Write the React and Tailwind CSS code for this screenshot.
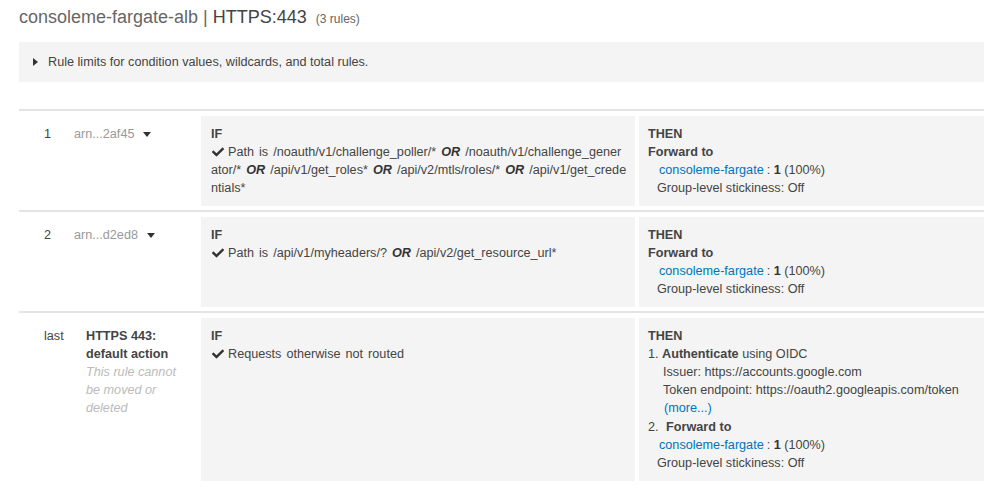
const Check = () => (
  <svg viewBox="0 0 512 512" className="inline-block w-[14px] h-[12px] mr-[3px] -mt-[2px] align-middle fill-[#333]">
    <path d="M173.9 439.4l-166.4-166.4c-10-10-10-26.2 0-36.2l36.2-36.2c10-10 26.2-10 36.2 0L192 312.7 432.1 72.6c10-10 26.2-10 36.2 0l36.2 36.2c10 10 10 26.2 0 36.2l-294.4 294.4c-10 10-26.2 10-36.2 0z" />
  </svg>
)

const Caret = () => (
  <svg viewBox="0 0 8 5" className="inline-block w-[8px] h-[5px] ml-[9px] align-middle fill-[#333]">
    <path d="M0 0h8L4 5z" />
  </svg>
)

const Or = () => <b className="italic font-bold text-[#333]"> OR </b>

function Forward() {
  return (
    <>
      <div className="pl-[11px]">
        <span className="text-[#0073bb]">consoleme-fargate</span>
        <span className="ml-[3px]">: </span>
        <b className="text-[#333]">1</b> (100%)
      </div>
      <div className="pl-[9px]">Group-level stickiness: Off</div>
    </>
  )
}

function Row({ num, name, italic, ifLines, then, wide }) {
  return (
    <div className="flex border-t-2 border-[#e4e4e4] pt-[5px] pb-[4px]">
      <div className={`${wide ? 'w-[57px]' : 'w-[45px]'} shrink-0 pl-[25px] pt-[9px] text-[#444]`}>{num}</div>
      <div className="flex-1 pl-[10px] pt-[9px]">
        {italic ? (
          <div className="w-[105px]">
            <div className="font-bold text-[#444]">{name}</div>
            <div className="italic text-[#bbb]">{italic}</div>
          </div>
        ) : (
          <span className="text-[#999]">
            {name}
            <Caret />
          </span>
        )}
      </div>
      <div className="w-[434px] shrink-0 bg-[#f4f4f4] px-[10px] py-[9px] [word-spacing:1.5px]">
        <div className="font-bold text-[#444]">IF</div>
        {ifLines.map((line, i) => (
          <div key={i} className="whitespace-nowrap">{line}</div>
        ))}
      </div>
      <div className="w-[345px] shrink-0 ml-[4px] bg-[#f4f4f4] pl-[9px] pr-[10px] py-[9px]">
        <div className="font-bold text-[#444]">THEN</div>
        {then}
      </div>
    </div>
  )
}

export default function App() {
  return (
    <div className="min-h-screen bg-white text-[12.65px] leading-[18px] text-[#444] font-['Liberation_Sans',Arial,sans-serif]">
      <div className="pl-[19px]">
        <div className="pt-[5px] text-[18px] leading-[24px]">
          <span className="text-[#666]">consoleme-fargate-alb | </span>
          <span className="text-[#444]">HTTPS:443</span>
          <span className="ml-[9px] text-[12px] leading-[18px] text-[#666]">(3 rules)</span>
        </div>

        <div className="mt-[13px] bg-[#f4f4f4] pl-[14px] py-[11px] flex items-center">
          <svg viewBox="0 0 5 8" className="w-[5px] h-[8px] fill-[#333]">
            <path d="M0 0l5 4-5 4z" />
          </svg>
          <span className="ml-[10px]">Rule limits for condition values, wildcards, and total rules.</span>
        </div>

        <div className="mt-[27px]">
          <Row
            num="1"
            name="arn...2af45"
            ifLines={[
              <><Check />Path is /noauth/v1/challenge_poller/*<Or />/noauth/v1/challenge_gener</>,
              <>ator/*<Or />/api/v1/get_roles*<Or />/api/v2/mtls/roles/*<Or />/api/v1/get_crede</>,
              <>ntials*</>,
            ]}
            then={
              <>
                <div className="font-bold text-[#444]">Forward to</div>
                <Forward />
              </>
            }
          />
          <Row
            num="2"
            name="arn...d2ed8"
            ifLines={[<><Check />Path is /api/v1/myheaders/?<Or />/api/v2/get_resource_url*</>]}
            then={
              <>
                <div className="font-bold text-[#444]">Forward to</div>
                <Forward />
              </>
            }
          />
          <Row
            num="last"
            wide
            name="HTTPS 443: default action"
            italic="This rule cannot be moved or deleted"
            ifLines={[<><Check />Requests otherwise not routed</>]}
            then={
              <>
                <div>
                  1. <b className="text-[#444]">Authenticate</b> using OIDC
                </div>
                <div className="pl-[15px]">Issuer: https://accounts.google.com</div>
                <div className="pl-[15px]">Token endpoint: https://oauth2.googleapis.com/token</div>
                <div className="pl-[16px] mb-[1px] text-[#0073bb]">(more...)</div>
                <div>
                  2. <b className="ml-[4px] text-[#444]">Forward to</b>
                </div>
                <Forward />
              </>
            }
          />
        </div>
      </div>
    </div>
  )
}
